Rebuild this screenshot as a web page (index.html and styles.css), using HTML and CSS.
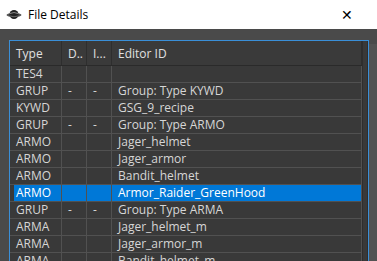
FILE: index.html
```html
<!DOCTYPE html>
<html>
<head lang="en">
    <meta charset="UTF-8">
    <title>File Details</title>
    <link rel="stylesheet" href="styles.css">
</head>
<body>
   <div id="titlebar">
       <svg class="icon" width="16" height="12" viewBox="0 0 16 12">
           <ellipse cx="8" cy="6" rx="7.5" ry="2" fill="#555"/>
           <circle cx="8" cy="5.5" r="4.5" fill="#222"/>
           <path d="M4 4.5 Q8 2.5 12 4.5" stroke="#888" fill="none"/>
           <path d="M4 7 Q8 8.5 12 7" stroke="#666" fill="none"/>
       </svg>
       <span class="title">File Details</span>
       <span class="close">&#x2715;</span>
   </div>
   <div id="content">
       <div id="frame">
           <table id="grid">
               <tr class="head">
                   <th class="c-type">Type</th>
                   <th class="c-d">D..</th>
                   <th class="c-i">I...</th>
                   <th>Editor ID</th>
               </tr>
               <tr><td>TES4</td><td></td><td></td><td></td></tr>
               <tr><td>GRUP</td><td>-</td><td>-</td><td>Group: Type KYWD</td></tr>
               <tr><td>KYWD</td><td></td><td></td><td>GSG_9_recipe</td></tr>
               <tr><td>GRUP</td><td>-</td><td>-</td><td>Group: Type ARMO</td></tr>
               <tr><td>ARMO</td><td></td><td></td><td>Jager_helmet</td></tr>
               <tr><td>ARMO</td><td></td><td></td><td>Jager_armor</td></tr>
               <tr><td>ARMO</td><td></td><td></td><td>Bandit_helmet</td></tr>
               <tr class="selected"><td>ARMO</td><td></td><td></td><td>Armor_Raider_GreenHood</td></tr>
               <tr><td>GRUP</td><td>-</td><td>-</td><td>Group: Type ARMA</td></tr>
               <tr><td>ARMA</td><td></td><td></td><td>Jager_helmet_m</td></tr>
               <tr><td>ARMA</td><td></td><td></td><td>Jager_armor_m</td></tr>
               <tr><td>ARMA</td><td></td><td></td><td>Bandit_helmet_m</td></tr>
           </table>
           <div id="strip"></div>
       </div>
       <div id="side"></div>
   </div>
</body>
</html>
```
FILE: styles.css
```css
*{
    margin: 0;
    padding: 0;
}
body{
    width: 377px;
    height: 261px;
    overflow: hidden;
    background: #4a4a4a;
    font-family: "Open Sans", "Liberation Sans", sans-serif;
    font-size: 12px;
}
#titlebar{
    height: 29px;
    background: #fff;
    display: flex;
    align-items: center;
    color: #000;
}
#titlebar .icon{
    margin-left: 6px;
    margin-right: 6px;
}
#titlebar .title{
    flex: 1;
    font-size: 12px;
}
#titlebar .close{
    width: 28px;
    margin-right: 16px;
    text-align: center;
    font-size: 14px;
    font-weight: 300;
}
#content{
    padding: 11px 0 0 9px;
    display: flex;
}
#frame{
    width: 358px;
    border: 1px solid #3a8fd8;
    border-bottom: none;
    background: #393939;
    display: flex;
    height: 230px;
}
#side{
    flex: 1;
    margin-top: 4px;
    background: #525252;
}
#grid{
    border-collapse: collapse;
    width: 352px;
    color: #d6d6d6;
    align-self: flex-start;
}
#grid th{
    height: 24px;
    font-weight: normal;
    text-align: left;
    padding-left: 6px;
    border-right: 1px solid #2e2e2e;
    border-bottom: 1px solid #2a2a2a;
    background: #3a3a3a;
    color: #e0e0e0;
}
#grid td{
    height: 16px;
    padding: 0 0 0 6px;
    border-right: 1px solid #515151;
    border-bottom: 1px solid #515151;
    line-height: 16px;
    white-space: nowrap;
}
#grid .c-type{
    width: 45px;
}
#grid .c-d,#grid .c-i{
    width: 18px;
}
#grid tr.selected td{
    background: #0078d7;
    color: #fff;
}
#grid tr.selected td:first-child{
    background: linear-gradient(to right, #393939 4px, #0078d7 4px);
}
#strip{
    flex: 1;
    border-left: 1px solid #2e2e2e;
    border-right: 1px solid #2e2e2e;
}
```
